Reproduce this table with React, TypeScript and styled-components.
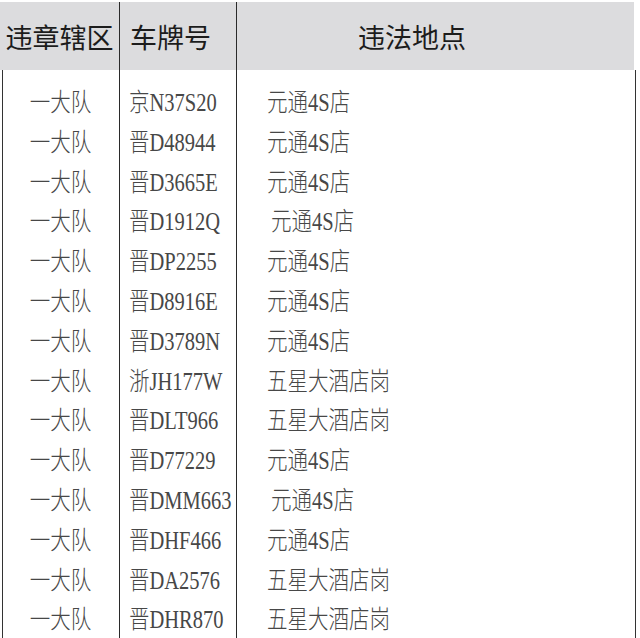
import styled, { createGlobalStyle } from "styled-components";

const Global = createGlobalStyle`
  html, body { margin: 0; padding: 0; background: #ffffff; }
  body { width: 640px; height: 638px; overflow: hidden; }
`;

const Sheet = styled.div`
  width: 640px;
  height: 638px;
  padding-top: 2px;
  box-sizing: border-box;
  background: #fff;
`;

const HeaderRow = styled.div`
  display: grid;
  grid-template-columns: 120px 117px 397px;
  width: 634px;
  height: 68px;
  background: #dcdcde;
`;

const HeadCell = styled.div<{ $pad: number; $center?: boolean; $last?: boolean }>`
  display: flex;
  align-items: center;
  justify-content: ${(p) => (p.$center ? "center" : "flex-start")};
  padding-left: ${(p) => p.$pad}px;
  box-sizing: border-box;
  border-right: ${(p) => (p.$last ? "none" : "1.5px solid #2a2a2a")};
  font-family: "Noto Sans CJK SC", sans-serif;
  font-size: 27px;
  color: #1c1c1c;
  white-space: nowrap;
`;

const Body = styled.div`
  border-left: 1.5px solid #333;
  border-right: 1.5px solid #333;
  margin-left: 2px;
  width: 634px;
  box-sizing: border-box;
  height: 568px;
`;

const Row = styled.div`
  display: grid;
  grid-template-columns: 117px 117px 397px;
  height: 39.8px;

  &:first-child {
    height: 51px;
  }
  &:first-child > * {
    padding-top: 11.2px;
  }
`;

const Cell = styled.div<{ $pad?: number; $center?: boolean; $divider?: boolean }>`
  display: flex;
  align-items: center;
  justify-content: ${(p) => (p.$center ? "center" : "flex-start")};
  padding-left: ${(p) => p.$pad ?? 0}px;
  padding-bottom: 2px;
  box-sizing: border-box;
  border-right: ${(p) => (p.$divider ? "1.5px solid #2a2a2a" : "none")};
  white-space: nowrap;
`;

const Text = styled.span<{ $origin?: string }>`
  display: inline-block;
  font-family: "Liberation Serif", "Noto Sans CJK SC", serif;
  font-weight: 300;
  font-size: 25px;
  color: #474747;
  transform: scaleX(0.82);
  transform-origin: ${(p) => p.$origin ?? "left"} center;
`;

const rows: [string, string, number][] = [
  ["京N37S20", "元通4S店", 0],
  ["晋D48944", "元通4S店", 0],
  ["晋D3665E", "元通4S店", 0],
  ["晋D1912Q", "元通4S店", 4],
  ["晋DP2255", "元通4S店", 0],
  ["晋D8916E", "元通4S店", 0],
  ["晋D3789N", "元通4S店", 0],
  ["浙JH177W", "五星大酒店岗", 0],
  ["晋DLT966", "五星大酒店岗", 0],
  ["晋D77229", "元通4S店", 0],
  ["晋DMM663", "元通4S店", 4],
  ["晋DHF466", "元通4S店", 0],
  ["晋DA2576", "五星大酒店岗", 0],
  ["晋DHR870", "五星大酒店岗", 0],
];

export default function App() {
  return (
    <Sheet>
      <Global />
      <HeaderRow>
        <HeadCell $pad={0} $center>违章辖区</HeadCell>
        <HeadCell $pad={10}>车牌号</HeadCell>
        <HeadCell $pad={121} $last>违法地点</HeadCell>
      </HeaderRow>
      <Body>
        {rows.map(([plate, place, shift], i) => (
          <Row key={i}>
            <Cell $center $divider>
              <Text $origin="center">一大队</Text>
            </Cell>
            <Cell $pad={9} $divider>
              <Text>{plate}</Text>
            </Cell>
            <Cell $pad={30 + shift}>
              <Text>{place}</Text>
            </Cell>
          </Row>
        ))}
      </Body>
    </Sheet>
  );
}
